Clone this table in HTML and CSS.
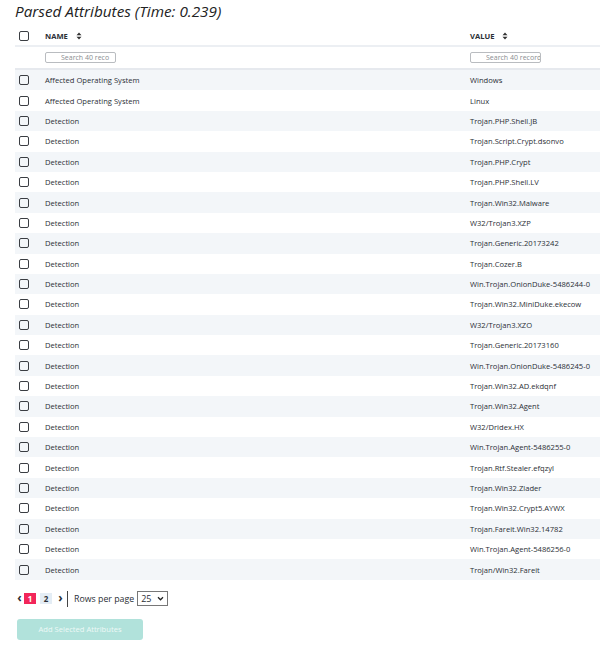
FILE: index.html
```html
<!DOCTYPE html>
<html lang="en">
<head>
    <meta charset="UTF-8">
    <title>Parsed Attributes</title>
    <link rel="stylesheet" href="styles.css">
</head>
<body>
    <h2 class="title">Parsed Attributes (Time: 0.239)</h2>

    <table class="attr-table">
        <thead>
            <tr class="head-row">
                <th class="col-check"><span class="box"></span></th>
                <th class="col-name">NAME <svg class="sort" width="6" height="8" viewBox="0 0 6 8"><path d="M3 0.5 L5.5 3.2 H0.5 Z M3 7.5 L5.5 4.8 H0.5 Z" fill="#333"/></svg></th>
                <th class="col-value">VALUE <svg class="sort" width="6" height="8" viewBox="0 0 6 8"><path d="M3 0.5 L5.5 3.2 H0.5 Z M3 7.5 L5.5 4.8 H0.5 Z" fill="#333"/></svg></th>
            </tr>
            <tr class="filter-row">
                <th></th>
                <th><input class="search" placeholder="Search 40 reco"></th>
                <th><input class="search" placeholder="Search 40 records"></th>
            </tr>
        </thead>
        <tbody id="rows"></tbody>
    </table>

    <div class="pager">
        <span class="arrow">&lsaquo;</span>
        <span class="page active">1</span>
        <span class="page">2</span>
        <span class="arrow">&rsaquo;</span>
        <span class="sep"></span>
        <span class="rpp">Rows per page</span>
        <span class="select">25 <svg width="7" height="5" viewBox="0 0 8 6"><path d="M1 1.5 L4 4.5 L7 1.5" fill="none" stroke="#222" stroke-width="1.5"/></svg></span>
    </div>

    <button class="add-btn" disabled>Add Selected Attributes</button>

    <script src="app.js"></script>
</body>
</html>
```

FILE: app.js
```js
const data = [
    ['Affected Operating System', 'Windows'],
    ['Affected Operating System', 'Linux'],
    ['Detection', 'Trojan.PHP.Shell.JB'],
    ['Detection', 'Trojan.Script.Crypt.dsonvo'],
    ['Detection', 'Trojan.PHP.Crypt'],
    ['Detection', 'Trojan.PHP.Shell.LV'],
    ['Detection', 'Trojan.Win32.Malware'],
    ['Detection', 'W32/Trojan3.XZP'],
    ['Detection', 'Trojan.Generic.20173242'],
    ['Detection', 'Trojan.Cozer.B'],
    ['Detection', 'Win.Trojan.OnionDuke-5486244-0'],
    ['Detection', 'Trojan.Win32.MiniDuke.ekecow'],
    ['Detection', 'W32/Trojan3.XZO'],
    ['Detection', 'Trojan.Generic.20173160'],
    ['Detection', 'Win.Trojan.OnionDuke-5486245-0'],
    ['Detection', 'Trojan.Win32.AD.ekdqnf'],
    ['Detection', 'Trojan.Win32.Agent'],
    ['Detection', 'W32/Dridex.HX'],
    ['Detection', 'Win.Trojan.Agent-5486255-0'],
    ['Detection', 'Trojan.Rtf.Stealer.efqzyl'],
    ['Detection', 'Trojan.Win32.Zlader'],
    ['Detection', 'Trojan.Win32.Crypt5.AYWX'],
    ['Detection', 'Trojan.Fareit.Win32.14782'],
    ['Detection', 'Win.Trojan.Agent-5486256-0'],
    ['Detection', 'Trojan/Win32.Fareit']
];

const tbody = document.getElementById('rows');
data.forEach(function (row) {
    const tr = document.createElement('tr');
    tr.innerHTML = '<td class="col-check"><span class="box"></span></td>' +
        '<td>' + row[0] + '</td><td>' + row[1] + '</td>';
    tbody.appendChild(tr);
});
```

FILE: styles.css
```css
body {
    margin: 0;
    padding: 0 0 0 15px;
    font-family: "Open Sans", Arial, sans-serif;
    color: #2b2f36;
    background: #fff;
}

.title {
    margin: 0;
    padding-top: 1px;
    height: 26px;
    font-size: 15.3px;
    font-weight: 400;
    font-style: italic;
    color: #222;
    line-height: 20px;
}

.attr-table {
    width: 585px;
    border-collapse: collapse;
    font-size: 7.6px;
    table-layout: fixed;
}

.col-name {
    width: 425px;
}

.head-row th {
    height: 18px;
    text-align: left;
    font-weight: 700;
    font-size: 7.6px;
    border-bottom: 2px solid #eceff3;
    padding: 0;
}

.sort {
    margin-left: 6px;
    vertical-align: -1px;
}

.filter-row th {
    height: 21px;
    padding: 0;
    text-align: left;
    border-bottom: 2px solid #e6e9ee;
}

.search {
    box-sizing: border-box;
    width: 71px;
    height: 11px;
    border: 1px solid #b9bcc0;
    border-radius: 2px;
    font-family: inherit;
    font-size: 7px;
    padding: 0 0 0 15px;
    color: #555;
    display: block;
}

.search::placeholder {
    color: #8a8d91;
}

td {
    height: 20.4px;
    padding: 0;
}

tbody tr:nth-child(odd) {
    background: #f3f6f9;
}

th.col-check,
td.col-check {
    width: 26px;
    padding-left: 4px;
}

.box {
    display: block;
    box-sizing: border-box;
    width: 10px;
    height: 10px;
    border: 1.3px solid #3a3d42;
    border-radius: 2px;
}

.pager {
    display: flex;
    align-items: center;
    margin-top: 10px;
    font-size: 8.8px;
    height: 18px;
}

.arrow {
    font-size: 12px;
    font-weight: 700;
    width: 9px;
    text-align: center;
    margin-top: -2px;
}

.page {
    width: 12px;
    height: 11px;
    line-height: 11px;
    text-align: center;
    font-weight: 700;
    font-size: 8px;
    background: #e4edf5;
    margin-right: 4px;
}

.page.active {
    background: #f2265a;
    color: #fff;
}

.sep {
    width: 1px;
    height: 16px;
    background: #444;
    margin: 0 6px 0 2px;
}

.select {
    display: flex;
    align-items: center;
    justify-content: space-between;
    box-sizing: border-box;
    width: 31px;
    height: 15px;
    margin-left: 3px;
    padding: 0 3px 0 3px;
    border: 1px solid #777;
    font-size: 9px;
}

.add-btn {
    display: block;
    margin: 11px 0 0 2px;
    width: 126px;
    height: 21px;
    border: none;
    border-radius: 3px;
    background: #b1e2db;
    color: #eef9f7;
    font-family: inherit;
    font-size: 7.6px;
}
```
